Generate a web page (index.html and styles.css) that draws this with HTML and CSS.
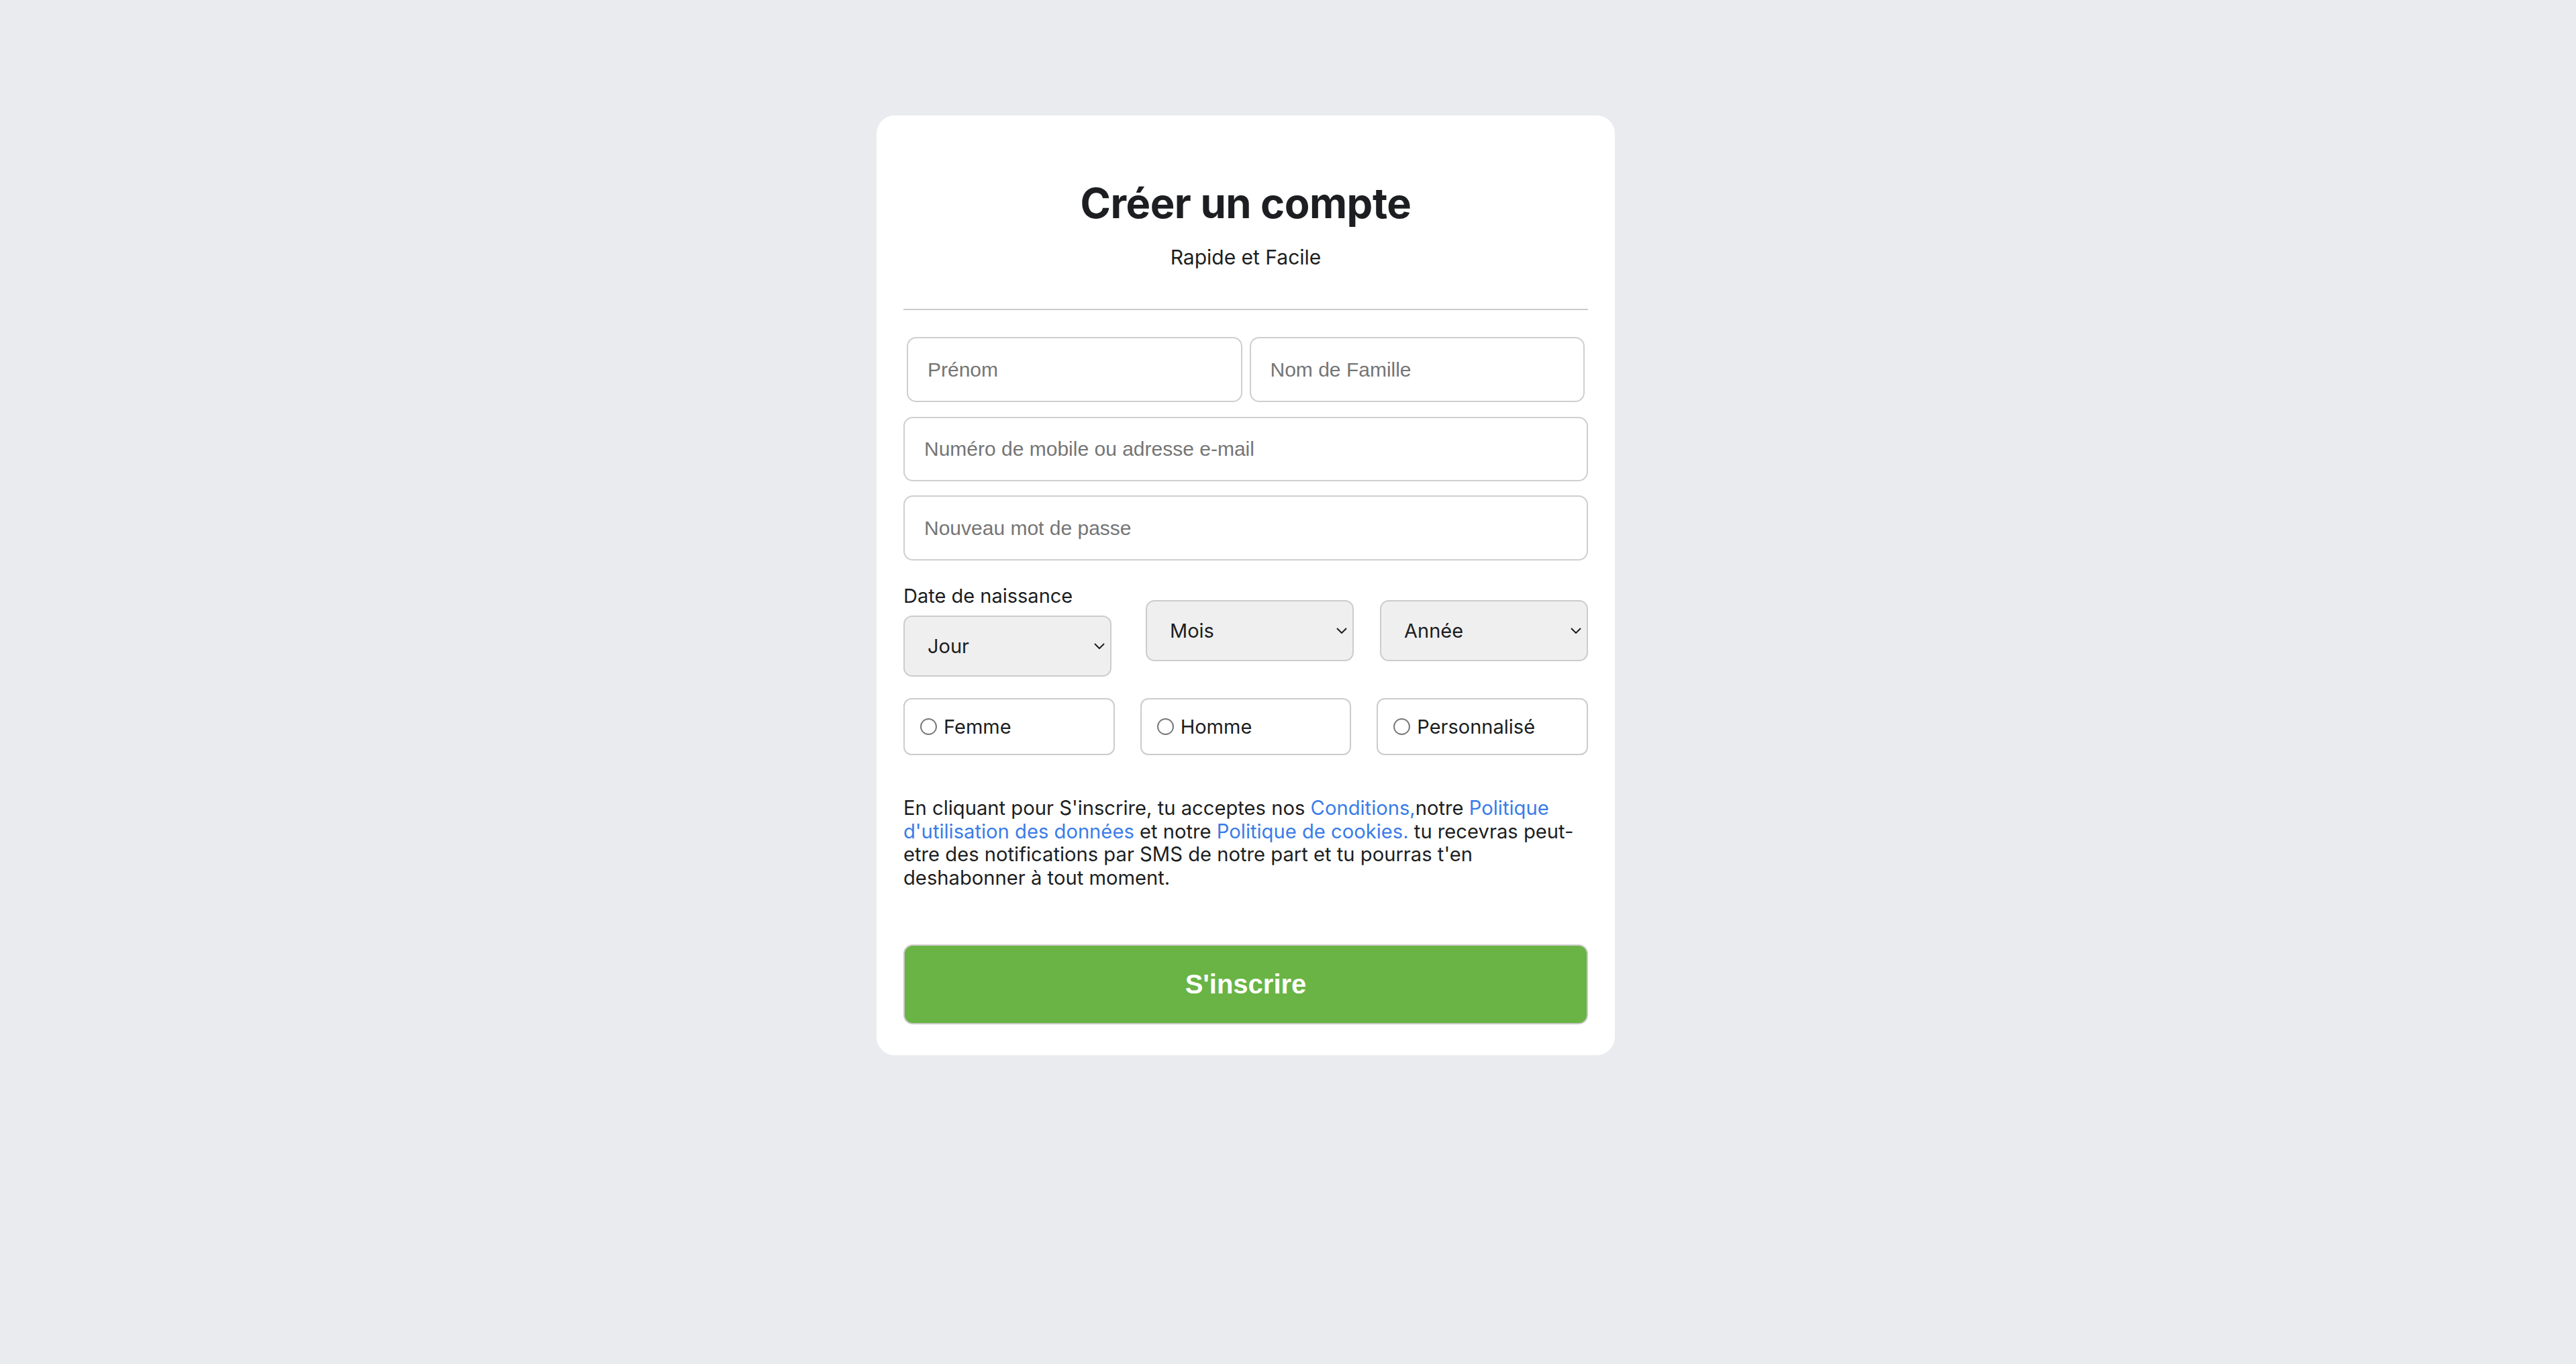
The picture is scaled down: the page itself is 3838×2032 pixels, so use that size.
FILE: index.html
```html
<!DOCTYPE html>
<html lang="fr">
<head>
<meta charset="utf-8">
<title>Créer un compte</title>
<link rel="stylesheet" href="styles.css">
</head>
<body>
<main class="card">
  <header class="card-head">
    <h1 class="title">Créer un compte</h1>
    <p class="subtitle">Rapide et Facile</p>
  </header>
  <div class="divider"></div>
  <form class="form">
    <div class="name-row">
      <input class="field field-half" type="text" placeholder="Prénom">
      <input class="field field-half" type="text" placeholder="Nom de Famille">
    </div>
    <input class="field field-full email" type="text" placeholder="Numéro de mobile ou adresse e-mail">
    <input class="field field-full password" type="password" placeholder="Nouveau mot de passe">

    <div class="dob">
      <div class="dob-first">
        <label class="dob-label">Date de naissance</label>
        <div class="select-wrap">
          <select class="select"><option>Jour</option></select>
          <svg class="chev" viewBox="0 0 16 9" width="16" height="9"><path d="M1 1 L8 8 L15 1" fill="none" stroke="#1c1e21" stroke-width="2"/></svg>
        </div>
      </div>
      <div class="select-wrap">
        <select class="select"><option>Mois</option></select>
        <svg class="chev" viewBox="0 0 16 9" width="16" height="9"><path d="M1 1 L8 8 L15 1" fill="none" stroke="#1c1e21" stroke-width="2"/></svg>
      </div>
      <div class="select-wrap">
        <select class="select"><option>Année</option></select>
        <svg class="chev" viewBox="0 0 16 9" width="16" height="9"><path d="M1 1 L8 8 L15 1" fill="none" stroke="#1c1e21" stroke-width="2"/></svg>
      </div>
    </div>

    <div class="gender">
      <label class="gender-opt"><input class="radio" type="radio" name="g"><span>Femme</span></label>
      <label class="gender-opt"><input class="radio" type="radio" name="g"><span>Homme</span></label>
      <label class="gender-opt"><input class="radio" type="radio" name="g"><span>Personnalisé</span></label>
    </div>

    <p class="terms">En cliquant pour S'inscrire, tu acceptes nos <a class="link" href="#">Conditions,</a>notre <a class="link" href="#">Politique d'utilisation des données</a> et notre <a class="link" href="#">Politique de cookies.</a> tu recevras peut-etre des notifications par SMS de notre part et tu pourras t'en deshabonner à tout moment.</p>

    <button class="submit" type="button">S'inscrire</button>
  </form>
</main>
</body>
</html>
```
FILE: styles.css
```css
* { box-sizing: border-box; }

html, body {
  margin: 0;
  padding: 0;
}

body {
  background: #e9ebee;
  font-family: Inter, "Noto Sans", sans-serif;
  color: #1c1e21;
  height: 2032px;
  overflow: hidden;
}

.card {
  width: 1100px;
  margin: 172px 0 0 calc(50% - 613px);
  background: #ffffff;
  border-radius: 27px;
  padding: 93px 40px 46px;
}

.card-head {
  text-align: center;
}

.title {
  margin: 0;
  font-size: 61.5px;
  line-height: 75px;
  font-weight: 700;
  color: #1c1e21;
  letter-spacing: -0.5px;
}

.subtitle {
  margin: 25px 0 0;
  font-size: 30px;
  line-height: 36px;
  color: #1c1e21;
}

.divider {
  height: 2px;
  background: #cbcbcb;
  margin-top: 59px;
}

.form {
  display: flex;
  flex-direction: column;
}

.name-row {
  display: flex;
  gap: 11px;
  padding: 0 5px;
  margin-top: 40px;
}

.field {
  height: 97px;
  border: 2px solid #cfcfcf;
  border-radius: 14px;
  padding: 0 29px;
  font-family: "Liberation Sans", Arial, sans-serif;
  font-size: 30px;
  color: #1c1e21;
  background: #fff;
  outline: none;
}

.field::placeholder {
  color: #757575;
}

.field-half {
  flex: 1 1 0;
  min-width: 0;
}

.field-full {
  flex: none;
  width: 100%;
  height: 96px;
}

.email { margin-top: 22px; }
.password { margin-top: 21px; height: 97px; }

.dob {
  display: flex;
  align-items: center;
  justify-content: space-between;
  margin-top: 35px;
}

.dob-first {
  width: 322px;
  display: flex;
  flex-direction: column;
  gap: 11px;
}

.dob-label {
  font-size: 29px;
  line-height: 36px;
  color: #1c1e21;
}

.select-wrap {
  position: relative;
  width: 310px;
  height: 91px;
}

.select {
  -webkit-appearance: none;
  appearance: none;
  width: 100%;
  height: 100%;
  background: #efefef;
  border: 2px solid #cccccc;
  border-radius: 13px;
  padding: 0 40px 0 34px;
  font-family: Inter, "Noto Sans", sans-serif;
  font-size: 29px;
  color: #1c1e21;
  outline: none;
}

.chev {
  position: absolute;
  right: 10px;
  top: 41px;
  pointer-events: none;
}

.gender {
  display: flex;
  gap: 38px;
  margin-top: 32px;
}

.gender-opt {
  flex: 1;
  height: 85px;
  border: 2px solid #cccccc;
  border-radius: 12px;
  display: flex;
  align-items: center;
  gap: 10px;
  padding-left: 23px;
  font-size: 29px;
  color: #1c1e21;
}

.radio {
  -webkit-appearance: none;
  appearance: none;
  width: 25px;
  height: 25px;
  margin: 0;
  border: 2px solid #7a7a7a;
  border-radius: 50%;
  background: #fff;
  flex: none;
}

.terms {
  margin: 62px 0 0;
  font-size: 29.2px;
  line-height: 34.5px;
  color: #1c1e21;
}

.link {
  color: #3a7ce8;
  text-decoration: none;
}

.submit {
  margin-top: 82px;
  width: 100%;
  height: 119px;
  background: #69b444;
  border: 2px solid #c9c9c9;
  border-radius: 14px;
  color: #ffffff;
  font-family: "Liberation Sans", Arial, sans-serif;
  font-weight: 700;
  font-size: 40px;
}
```
